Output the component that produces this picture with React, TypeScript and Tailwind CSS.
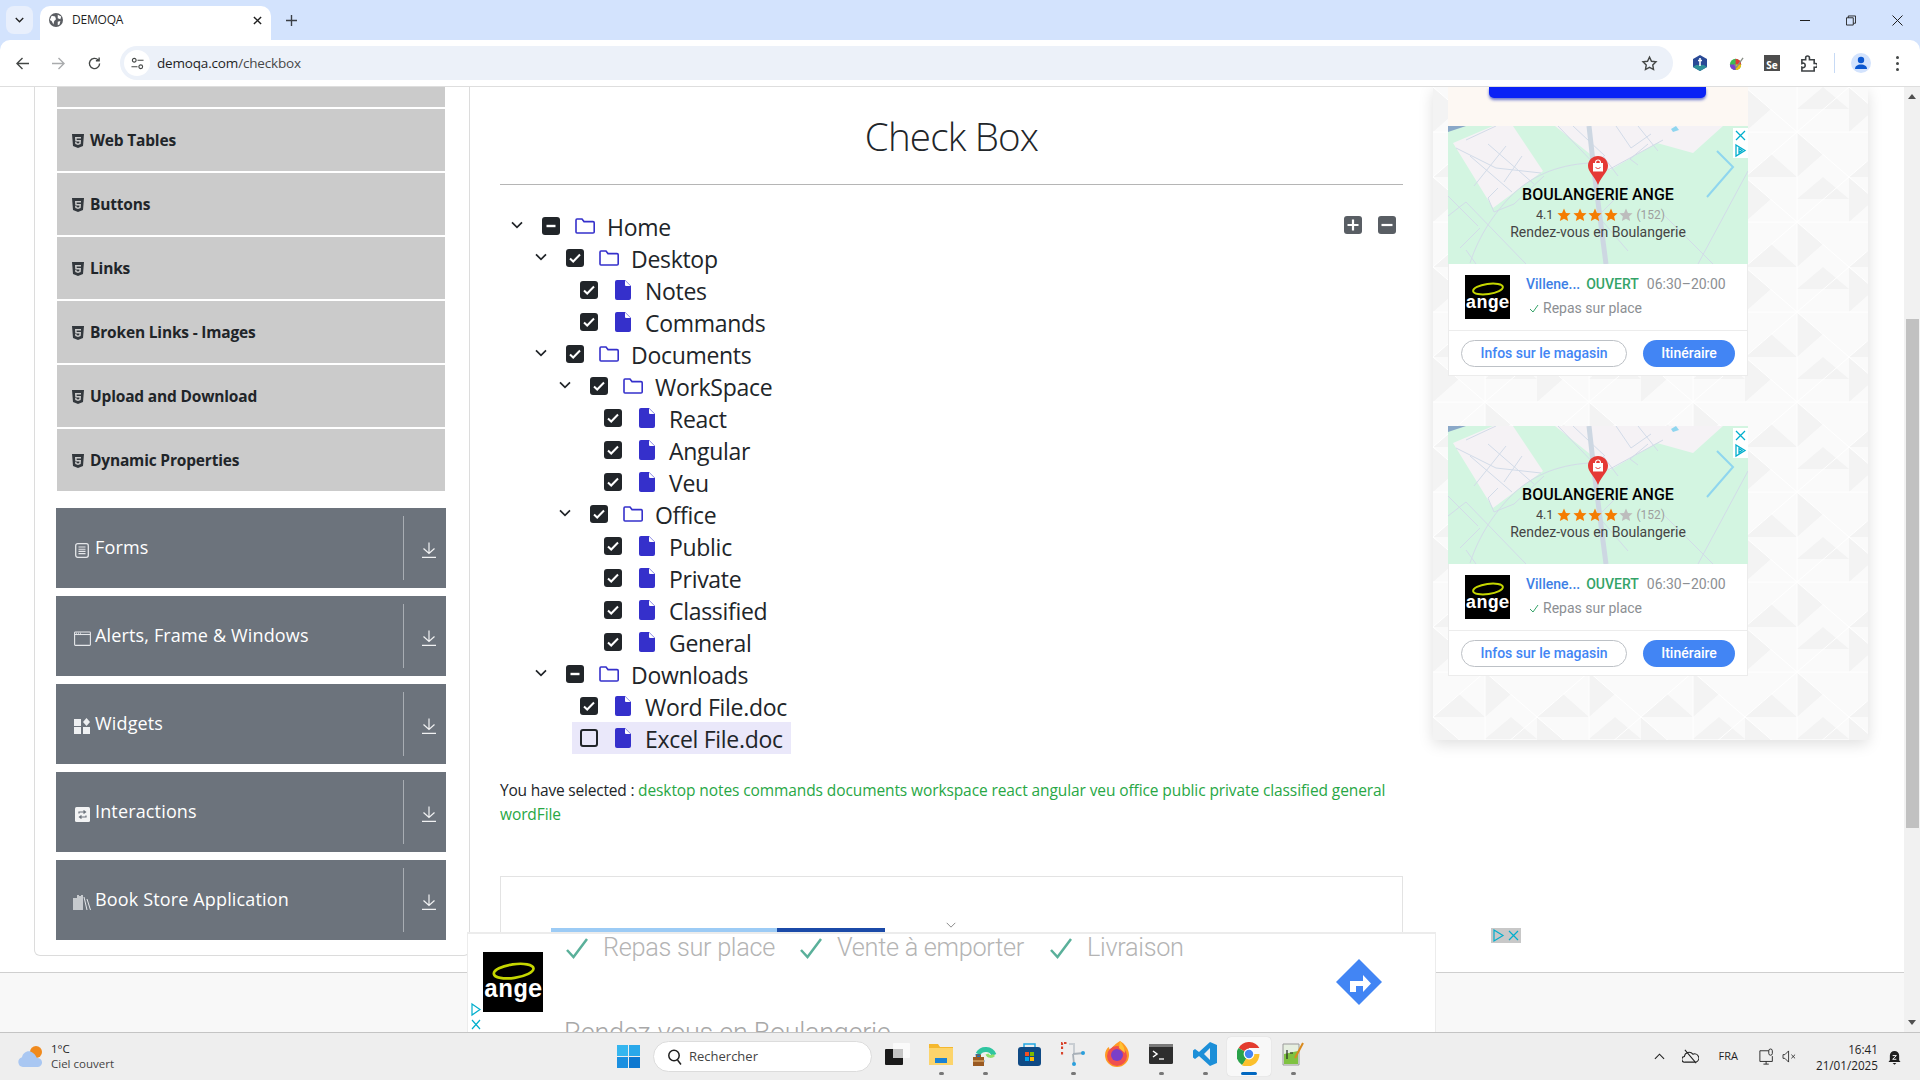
import type { ReactNode } from "react";

const uiFont = "[font-family:'Open_Sans','Noto_Sans',sans-serif]";

type TreeItem = {
  label: string;
  state?: "all" | "some" | "none";
  children?: TreeItem[];
  active?: boolean;
};

const tree: TreeItem = {
  label: "Home",
  state: "some",
  children: [
    {
      label: "Desktop",
      children: [{ label: "Notes" }, { label: "Commands" }],
    },
    {
      label: "Documents",
      children: [
        {
          label: "WorkSpace",
          children: [{ label: "React" }, { label: "Angular" }, { label: "Veu" }],
        },
        {
          label: "Office",
          children: [
            { label: "Public" },
            { label: "Private" },
            { label: "Classified" },
            { label: "General" },
          ],
        },
      ],
    },
    {
      label: "Downloads",
      state: "some",
      children: [
        { label: "Word File.doc" },
        { label: "Excel File.doc", state: "none", active: true },
      ],
    },
  ],
};

const elementItems = [
  "Web Tables",
  "Buttons",
  "Links",
  "Broken Links - Images",
  "Upload and Download",
  "Dynamic Properties",
];

function Html5Icon() {
  return (
    <svg viewBox="0 0 12 14" className="h-[14px] w-[12px] shrink-0">
      <path d="M0 0h12l-1 12-5 2-5-2z" fill="#33383d" />
      <path d="M3 3h6v1.500H4.600l.1 1.500H9l-.3 4L6 11l-2.700-1-.2-2h1.400l.1 1L6 9.500 7.300 9l.1-1.600H3.300z" fill="#cbcbcb" />
    </svg>
  );
}

function FormsIcon() {
  return (
    <svg viewBox="0 0 14 15" className="h-[15px] w-[14px]" fill="none" stroke="#e5e7ea">
      <rect x="0.700" y="0.700" width="12.600" height="13.600" rx="2" strokeWidth="1.300" />
      <path d="M3.500 4h7M3.500 6.200h7M3.500 8.400h7M3.500 10.600h7" strokeWidth="1.100" />
    </svg>
  );
}

function WindowIcon() {
  return (
    <svg viewBox="0 0 17 15" className="h-[15px] w-[17px]" fill="none" stroke="#e5e7ea">
      <rect x="0.600" y="1" width="15.800" height="13.400" rx="0.800" strokeWidth="1.100" />
      <path d="M0.600 3.500h15.800" strokeWidth="1.100" />
      <path d="M2 2.200h1M4 2.200h1M6 2.200h1" strokeWidth="1" />
    </svg>
  );
}

function WidgetsIcon() {
  return (
    <svg viewBox="0 0 16 16" className="h-[16px] w-[16px]" fill="#eef0f2">
      <rect x="0" y="1" width="7" height="7" />
      <rect x="0" y="9" width="7" height="7" />
      <rect x="9" y="9" width="7" height="7" />
      <path d="M12.500 0l3.500 4-3.500 4L9 4z" />
    </svg>
  );
}

function InteractionsIcon() {
  return (
    <svg viewBox="0 0 15 15" className="h-[15px] w-[15px]">
      <rect width="15" height="15" rx="1.500" fill="#f2f3f4" />
      <path d="M4 6.500V5h6M8.500 3.500L10.500 5 8.500 6.500M11 8.500V10H5M6.500 11.500L4.500 10l2-1.500" fill="none" stroke="#6c737c" strokeWidth="1.200" />
    </svg>
  );
}

function BooksIcon() {
  return (
    <svg viewBox="0 0 18 16" className="h-[16px] w-[18px]" fill="none" stroke="#e5e7ea">
      <path d="M1 4v12M3 4v12M5 1v15M7 2v14M9 1v15" strokeWidth="1.500" />
      <path d="M11 3l3 13M14 5l3.500 11" strokeWidth="1" />
    </svg>
  );
}

function DownloadArrow() {
  return (
    <svg viewBox="0 0 16 16" className="h-[16px] w-[16px]" fill="none" stroke="#f1f2f3" strokeWidth="1.200">
      <path d="M8 0.500v11M2.500 6.500L8 11.500l5.500-5M1 15.300h14" />
    </svg>
  );
}

function Chevron({ className }: { className: string }) {
  return (
    <svg viewBox="0 0 12 8" className={className} fill="none" stroke="currentColor" strokeWidth="1.700">
      <path d="M1 1.300l5 5 5-5" />
    </svg>
  );
}

function TreeCheckbox({ state }: { state: "all" | "some" | "none" }) {
  if (state === "none") {
    return <span className="block h-[18px] w-[18px] shrink-0 rounded-[3px] border-2 border-[#212529] bg-transparent" />;
  }
  return (
    <svg viewBox="0 0 18 18" className="h-[18px] w-[18px] shrink-0">
      <rect width="18" height="18" rx="3" fill="#212529" />
      {state === "all" ? (
        <path d="M4 9.500l3.200 3L14 5.500" fill="none" stroke="#fff" strokeWidth="2" />
      ) : (
        <path d="M4.500 9h9" stroke="#fff" strokeWidth="2.400" />
      )}
    </svg>
  );
}

function FolderIcon() {
  return (
    <svg viewBox="0 0 20 16" className="h-[16px] w-[20px] shrink-0" fill="none" stroke="#3530cb" strokeWidth="1.600">
      <path d="M1 14V2.300C1 1.500 1.400 1 2 1h5l2 2.600h9c.7 0 1.200.5 1.200 1.200V14c0 .6-.5 1-1.200 1H2c-.6 0-1-.4-1-1z" />
    </svg>
  );
}

function FileIcon() {
  return (
    <svg viewBox="0 0 16 20" className="h-[20px] w-[16px] shrink-0">
      <path d="M2 0h8l6 6v12a2 2 0 01-2 2H2a2 2 0 01-2-2V2a2 2 0 012-2z" fill="#3530cb" />
      <path d="M10 0.500L15.500 6H11a1 1 0 01-1-1z" fill="#fff" />
    </svg>
  );
}

function TreeNode({ item }: { item: TreeItem }) {
  const state = item.state ?? "all";
  if (!item.children) {
    return (
      <div className="flex h-8 items-center">
        <div className={`ml-[14px] flex h-8 items-center pl-2 ${item.active ? "bg-[#eae8fa] pr-[8px]" : ""}`}>
          <TreeCheckbox state={state} />
          <span className="ml-[17px]">
            <FileIcon />
          </span>
          <span className="ml-[14px] translate-y-[1px] text-[23px] leading-8 tracking-[-0.3px] text-[#212529]">{item.label}</span>
        </div>
      </div>
    );
  }
  return (
    <div>
      <div className="flex h-8 items-center">
        <span className="flex w-[14px] justify-center text-[#212529]">
          <Chevron className="h-[8px] w-[12px] -translate-y-[1px]" />
        </span>
        <span className="ml-[18px]">
          <TreeCheckbox state={state} />
        </span>
        <span className="ml-[15px]">
          <FolderIcon />
        </span>
        <span className="ml-[12px] translate-y-[1px] text-[23px] leading-8 tracking-[-0.3px] text-[#212529]">{item.label}</span>
      </div>
      <div className="pl-6">
        {item.children.map((child) => (
          <TreeNode key={child.label} item={child} />
        ))}
      </div>
    </div>
  );
}

function BrowserChrome() {
  return (
    <div className={`shrink-0 bg-[#d3e3fd] ${uiFont}`}>
      <div className="flex h-10 items-start pl-[6px] pt-[6px]">
        <div className="flex h-7 w-[27px] items-center justify-center rounded-lg bg-[#e8effc] text-[#1f1f1f]">
          <Chevron className="h-[6px] w-[9px]" />
        </div>
        <div className="ml-[7px] flex h-[34px] w-[231px] items-center rounded-t-[10px] bg-white pb-[6px] pl-[9px] pr-[9px]">
          <svg viewBox="0 0 16 16" className="h-[14px] w-[14px]">
            <circle cx="8" cy="8" r="8" fill="#5b5e63" />
            <path d="M3 3l4 1 1 3-2 2-1 4-2-4-2-1zM10 2l4 2-1 3-3-1zM10 10l3-1-1 4-2 1z" fill="#fff" />
          </svg>
          <span className="ml-[9px] flex-1 text-[12px] tracking-[-0.2px] text-[#1f1f1f]">DEMOQA</span>
          <svg viewBox="0 0 10 10" className="h-[9px] w-[9px]" fill="none" stroke="#1f1f1f" strokeWidth="1.600">
            <path d="M1 1l8 8M9 1l-8 8" />
          </svg>
        </div>
        <svg viewBox="0 0 12 12" className="ml-[15px] mt-[9px] h-[11px] w-[11px]" fill="none" stroke="#3a3f45" strokeWidth="1.500">
          <path d="M6 0v12M0 6h12" />
        </svg>
        <div className="ml-auto flex h-[28px] items-center pr-[17px] text-[#1f1f1f]">
          <span className="h-px w-[10px] bg-[#1f1f1f]" />
          <svg viewBox="0 0 11 11" className="ml-[36px] h-[11px] w-[10px]" fill="none" stroke="#1f1f1f">
            <path d="M0.500 2.500h7.500v8h-7.500zM2.500 2.500v-2h8v8h-2.500" />
          </svg>
          <svg viewBox="0 0 11 11" className="ml-[36px] h-[11px] w-[11px]" fill="none" stroke="#1f1f1f">
            <path d="M0.500 0.500l10 10M10.500 0.500l-10 10" />
          </svg>
        </div>
      </div>
      <div className="flex h-[47px] items-center rounded-t-[10px] border-b border-[#dedede] bg-white pl-1">
        <span className="flex w-9 justify-center">
          <svg viewBox="0 0 14 14" className="h-[13px] w-[13px]" fill="none" stroke="#444746" strokeWidth="1.500">
            <path d="M14 7H1.500M7 1L1 7l6 6" />
          </svg>
        </span>
        <span className="flex w-9 justify-center">
          <svg viewBox="0 0 14 14" className="h-[13px] w-[13px]" fill="none" stroke="#a9abad" strokeWidth="1.500">
            <path d="M0 7h12.500M7 1l6 6-6 6" />
          </svg>
        </span>
        <span className="flex w-9 justify-center">
          <svg viewBox="0 0 14 14" className="h-[13px] w-[13px]" fill="none" stroke="#444746" strokeWidth="1.500">
            <path d="M12.500 7A5.500 5.500 0 1111 3.200M12 0.500v3.500H8.500" />
          </svg>
        </span>
        <div className="ml-2 flex h-[34px] w-[1553px] items-center rounded-full bg-[#ecf1f9] pl-[4px]">
          <span className="flex h-[26px] w-[26px] items-center justify-center rounded-full bg-white">
            <svg viewBox="0 0 14 14" className="h-[13px] w-[13px]" fill="none" stroke="#444746" strokeWidth="1.200">
              <circle cx="3.500" cy="3.500" r="2" />
              <circle cx="10.500" cy="10.500" r="2" />
              <path d="M7 3.500h6.500M0.500 10.500H7" />
            </svg>
          </span>
          <span className="ml-[7px] text-[13.500px] tracking-[-0.17px] text-[#1f1f1f]">
            demoqa.com<span className="text-[#474747]">/checkbox</span>
          </span>
          <svg viewBox="0 0 24 24" className="ml-auto mr-[15px] h-[17px] w-[17px]" fill="none" stroke="#444746" strokeWidth="2">
            <path d="M12 3l2.800 5.800 6.400.9-4.600 4.500 1.100 6.300L12 17.500l-5.700 3 1.100-6.300L2.800 9.700l6.400-.9z" />
          </svg>
        </div>
        <div className="ml-[9px] flex items-center">
          <span className="flex w-9 justify-center">
            <svg viewBox="0 0 14 16" className="h-[16px] w-[14px]">
              <path d="M7 0l7 4v8l-7 4-7-4V4z" fill="#2a4a96" />
              <path d="M7 16l-7-4 3-2h8l3 2z" fill="#2f8f98" />
              <path d="M7 3v8M5 5.500h4" stroke="#fff" strokeWidth="1.600" />
            </svg>
          </span>
          <span className="flex w-9 justify-center">
            <svg viewBox="0 0 16 16" className="h-[15px] w-[15px]">
              <circle cx="7" cy="9" r="6" fill="#3cba54" />
              <path d="M7 9V3a6 6 0 016 6z" fill="#e53935" />
              <path d="M7 9h6a6 6 0 01-6 6z" fill="#f4c20d" />
              <path d="M7 9v6a6 6 0 01-6-6z" fill="#7b3fd0" />
              <path d="M6 9l2 3 7-10" fill="none" stroke="#8a8f86" strokeWidth="1.400" />
            </svg>
          </span>
          <span className="flex w-9 justify-center">
            <span className="relative flex h-[16px] w-[16px] items-end justify-center bg-[#4d4d4d] text-[10px] font-bold leading-[12px] text-white">
              Se
            </span>
          </span>
          <span className="flex w-9 justify-center">
            <svg viewBox="0 0 18 18" className="h-[17px] w-[17px]" fill="none" stroke="#3c4043" strokeWidth="1.700">
              <path d="M2 5h4V3a2 2 0 014 0v2h5v4h1.500a2 2 0 010 4H15v4H2v-4c2 1 3.500 0 3.500-2S4 8 2 9z" />
            </svg>
          </span>
          <span className="ml-2 h-[20px] w-px bg-[#c7daf5]" />
          <span className="ml-2 flex w-9 justify-center">
            <span className="flex h-[20px] w-[20px] items-center justify-center rounded-full bg-[#d3e3fd]">
              <svg viewBox="0 0 14 14" className="h-[14px] w-[14px]" fill="#0b57d0">
                <circle cx="7" cy="4" r="3.200" />
                <path d="M1 13c0-3 2.500-4.500 6-4.500s6 1.500 6 4.500z" />
              </svg>
            </span>
          </span>
          <span className="flex w-9 flex-col items-center gap-[3px]">
            <span className="h-[3px] w-[3px] rounded-full bg-[#444746]" />
            <span className="h-[3px] w-[3px] rounded-full bg-[#444746]" />
            <span className="h-[3px] w-[3px] rounded-full bg-[#444746]" />
          </span>
        </div>
      </div>
    </div>
  );
}

function GroupHeader({ icon, label }: { icon: ReactNode; label: string }) {
  return (
    <div className="mb-2 flex h-20 items-center bg-[#6c737c] text-white">
      <span className="flex w-[37px] justify-end pt-[4px]">
        <span className="flex w-[22px] justify-center">{icon}</span>
      </span>
      <span className="flex-1 -translate-y-[1px] pl-[2px] text-[18px] tracking-[0.15px]">{label}</span>
      <div className="flex h-16 w-[43px] items-center justify-center border-l border-[#a8adb3] pl-[8px] pt-[4px]">
        <DownloadArrow />
      </div>
    </div>
  );
}

function Sidebar() {
  return (
    <aside className="ml-[34px] h-[869px] w-[436px] shrink-0 rounded-b-[6px] border-x border-b border-[#dcdcdc] pl-[21px] pr-[23px]">
      <div className="flex flex-col gap-[2px] px-px">
        <div className="h-5 bg-[#cbcbcb]" />
        {elementItems.map((item) => (
          <div key={item} className="flex h-[62px] items-center gap-[6px] bg-[#cbcbcb] pl-[15px] pt-[2px] text-[15.500px] font-bold tracking-[-0.18px] text-[#212529]">
            <Html5Icon />
            {item}
          </div>
        ))}
      </div>
      <div className="mt-[17px]">
        <GroupHeader icon={<FormsIcon />} label="Forms" />
        <GroupHeader icon={<WindowIcon />} label="Alerts, Frame & Windows" />
        <GroupHeader icon={<WidgetsIcon />} label="Widgets" />
        <GroupHeader icon={<InteractionsIcon />} label="Interactions" />
        <GroupHeader icon={<BooksIcon />} label="Book Store Application" />
      </div>
    </aside>
  );
}

function MainContent() {
  return (
    <main className="flex h-full w-[963px] shrink-0 flex-col px-[30px]">
      <div className="flex h-[98px] items-center justify-center border-b border-[#b5b5b5]">
        <h1 className="translate-y-[1px] text-[38.500px] font-light tracking-[-0.8px] text-[#212529]">Check Box</h1>
      </div>
      <div className="relative pl-[10px] pt-[25px]">
        <TreeNode item={tree} />
        <div className="absolute right-[7px] top-[31px] flex gap-4">
          <svg viewBox="0 0 18 18" className="h-[18px] w-[18px]">
            <rect width="18" height="18" rx="3" fill="#595e64" />
            <path d="M9 3.500v11M3.500 9h11" stroke="#fff" strokeWidth="2.200" />
          </svg>
          <svg viewBox="0 0 18 18" className="h-[18px] w-[18px]">
            <rect width="18" height="18" rx="3" fill="#595e64" />
            <path d="M3.500 9h11" stroke="#fff" strokeWidth="2.200" />
          </svg>
        </div>
      </div>
      <p className="mt-6 text-[15.500px] leading-6 tracking-[-0.2px] text-[#212529]">
        You have selected :{" "}
        <span className="tracking-[-0.1px] text-[#28a745]">
          desktop notes commands documents workspace react angular veu office public private classified general wordFile
        </span>
      </p>
      <div className="mt-[50px] flex-1 border-x border-t border-[#e3e3e3]" />
    </main>
  );
}

function AngeLogo({ className }: { className: string }) {
  return (
    <svg viewBox="0 0 45 44" preserveAspectRatio="none" className={className}>
      <rect width="45" height="44" fill="#000" />
      <ellipse cx="23" cy="14" rx="15" ry="5" fill="none" stroke="#c5d600" strokeWidth="2" transform="rotate(-8 23 14)" />
      <text x="0.500" y="33" textLength="44" lengthAdjust="spacingAndGlyphs" fontSize="19" fontWeight="700" fill="#fff" fontFamily="'Liberation Mono', monospace">
        ange
      </text>
    </svg>
  );
}

function MapArt() {
  return (
    <svg viewBox="0 0 300 138" className="h-full w-full" fill="none">
      <rect width="300" height="138" fill="#d3f5e1" />
      <path d="M5 17L45 0h20L95 45 45 82zM107 0h168l-30 27-36-10-47 27z" fill="#f5f2f5" />
      <path d="M0 0h18L0 6z" fill="#8aa8c8" />
      <path d="M228 0l3 4-6 2-2-3z" fill="#8fd6ef" />
      <path d="M18 14l30-14M8 22l40 20 45 5M22 30l42 36M40 18l46 40M58 20l-32 40M74 30l-18 26M96 50l-30 28-20 8-6-14 10-10M22 137c10-30 25-50 40-66 20-20 45-32 80-34M0 90l18-14 60 62M0 70l30 30M110 0l42 44M125 0l32 30M168 0l15 22 20-14M190 0l20 25M160 44l55-30M155 30l15 20M200 18l-18 15 8 6M215 88l50 50M180 125l-30-35 30-30M300 45l-50 93M28 138l-10-14M12 122l20-20" stroke="#d2dbe8" strokeWidth="1" />
      <path d="M141 0l5 45 12 93" stroke="#cdd7e2" strokeWidth="5" />
      <path d="M269 25l16 16-26 30" stroke="#8fd6ef" strokeWidth="2" />
    </svg>
  );
}

function Star({ filled }: { filled: boolean }) {
  return (
    <svg viewBox="0 0 24 24" className="h-[14px] w-[14px]">
      <path d="M12 1l3.300 7.400 8 .8-6 5.300 1.800 7.900L12 18.300l-7.100 4.100 1.800-7.900-6-5.300 8-.8z" fill={filled ? "#f57c00" : "#bdbdbd"} />
    </svg>
  );
}

function AdChoiceMarks() {
  return (
    <div className="absolute right-0 top-[2px] flex w-[15px] flex-col bg-white">
      <svg viewBox="0 0 15 15" className="h-[15px] w-[15px]" fill="none" stroke="#00aecd" strokeWidth="1.300">
        <path d="M3 3l9 9M12 3l-9 9" />
      </svg>
      <svg viewBox="0 0 15 15" className="h-[15px] w-[15px]" fill="none" stroke="#00aecd" strokeWidth="1.300">
        <path d="M3 2l9 5.500L3 13zM6 5.500l3 2-3 2z" />
      </svg>
    </div>
  );
}

function StoreCard() {
  return (
    <div className="relative h-[250px] w-[300px] bg-white [font-family:Roboto,sans-serif]">
      <div className="relative h-[138px]">
        <MapArt />
        <AdChoiceMarks />
        <div className="absolute inset-x-0 top-[30px] flex flex-col items-center">
          <svg viewBox="0 0 20 29" className="h-[29px] w-[20px]">
            <path d="M10 0c5.600 0 10 4.300 10 9.800 0 6-6 9.500-10 19.200C6 19.300 0 15.800 0 9.800 0 4.300 4.400 0 10 0z" fill="#e53935" />
            <path d="M5 7h10v8.500H5z" fill="#fff" />
            <path d="M7.500 7c0-4 5-4 5 0" fill="none" stroke="#fff" strokeWidth="1.200" />
            <path d="M7.500 11c1 2 4 2 5 0" fill="none" stroke="#e53935" strokeWidth="1" />
          </svg>
          <span className="text-[16px] font-medium leading-[20px] text-black">BOULANGERIE ANGE</span>
          <span className="flex h-[20px] items-center pl-[5px] text-[12.500px] text-[#444]">
            4.1
            <span className="ml-[4px] flex gap-[1.500px]">
              <Star filled />
              <Star filled />
              <Star filled />
              <Star filled />
              <Star filled={false} />
            </span>
            <span className="ml-[3px] text-[12px] text-[#9e9e9e]">(152)</span>
          </span>
          <span className="-mt-px text-[14px] leading-[16px] text-[#444]">Rendez-vous en Boulangerie</span>
        </div>
      </div>
      <div className="flex h-[67px] items-start border-x border-b border-[#ececec] pl-4 pt-[11px]">
        <AngeLogo className="h-[44px] w-[45px]" />
        <div className="ml-4">
          <div className="flex h-[18px] items-center text-[14px] leading-[18px]">
            <span className="font-medium text-[#3d7fe6]">Villene...</span>
            <span className="ml-[6px] font-medium text-[#34a468]">OUVERT</span>
            <span className="ml-[8px] text-[#8c8f93]">06:30–20:00</span>
          </div>
          <div className="mt-[6px] flex items-center text-[14px] leading-[18px] text-[#8c8f93]">
            <svg viewBox="0 0 10 9" className="ml-[3px] mr-[4px] h-[9px] w-[10px]" fill="none" stroke="#34a468" strokeWidth="1">
              <path d="M1 5l3 3 5-7" />
            </svg>
            Repas sur place
          </div>
        </div>
      </div>
      <div className="flex h-[45px] items-center gap-4 border-x border-b border-[#ececec] pl-[12px]">
        <span className="flex h-[27px] w-[166px] items-center justify-center rounded-full border border-[#bdc1c6] text-[14px] font-medium text-[#4285f4]">
          Infos sur le magasin
        </span>
        <span className="flex h-[27px] w-[92px] items-center justify-center rounded-full bg-[#4285f4] text-[14px] font-medium text-white">
          Itinéraire
        </span>
      </div>
    </div>
  );
}

function AdPanel() {
  return (
    <div className="relative h-[653px] w-[435px] shrink-0 overflow-hidden bg-[#fafafa] pl-[15px] shadow-[0_4px_14px_rgba(0,0,0,0.13)]">
      <svg className="absolute inset-0 h-full w-full">
        <defs>
          <pattern id="tri" width="104" height="90" patternUnits="userSpaceOnUse">
            <path d="M0 0l26 22L0 45zM52 45l26 22-26 23zM78 0l26 22H52zM26 67l26 23H0z" fill="#f3f3f3" />
            <path d="M0 0l104 90M104 0L0 90M52 0v90M0 45h104" stroke="#fff" strokeWidth="1" />
          </pattern>
        </defs>
        <rect width="100%" height="100%" fill="url(#tri)" />
      </svg>
      <div className="relative">
        <div className="h-[39px] w-[300px] bg-[#fdf8f3] pl-[41px]">
          <div className="h-[11px] w-[217px] rounded-b-[5px] bg-[#0a22f5] shadow-[0_2px_3px_rgba(10,34,180,0.6)]" />
        </div>
        <StoreCard />
        <div className="h-[50px]" />
        <StoreCard />
      </div>
    </div>
  );
}

function CheckMark({ className }: { className: string }) {
  return (
    <svg viewBox="0 0 24 24" className={className} fill="none" stroke="#5ab09a" strokeWidth="2.500">
      <path d="M2 14l6.500 7L22 3" />
    </svg>
  );
}

function StickyAd() {
  return (
    <div className="absolute bottom-0 left-[467px] h-[100px] w-[969px] overflow-hidden border-x border-t-2 border-[#ececec] bg-white [font-family:Roboto,sans-serif]">
      <div className="flex h-[28px] items-center pl-[96px] text-[25.300px] font-light tracking-[-0.3px] text-[#b4b4b4]">
        <CheckMark className="h-[24px] w-[26px]" />
        <span className="ml-[13px]">Repas sur place</span>
        <CheckMark className="ml-[23px] h-[24px] w-[26px]" />
        <span className="ml-[13px]">Vente à emporter</span>
        <CheckMark className="ml-[24px] h-[24px] w-[26px]" />
        <span className="ml-[13px]">Livraison</span>
      </div>
      <div className="absolute left-[15px] top-[18px]">
        <AngeLogo className="h-[60px] w-[60px]" />
      </div>
      <div className="absolute left-[96px] top-[84px] text-[27px] font-light leading-[30px] tracking-[-0.3px] text-[#a8a8a8]">
        Rendez-vous en Boulangerie
      </div>
      <svg viewBox="0 0 46 46" className="absolute left-[868px] top-[25px] h-[46px] w-[46px]">
        <path d="M23 0l23 23-23 23L0 23z" fill="#4285f4" />
        <path d="M14 33V22h13v-6l8 8.500-8 8.500v-6h-7v6z" fill="#fff" />
      </svg>
      <div className="absolute bottom-0 left-[2px] flex flex-col">
        <svg viewBox="0 0 12 15" className="h-[15px] w-[12px]" fill="none" stroke="#00aecd" strokeWidth="1.200">
          <path d="M2 2l8 5.500L2 13z" />
        </svg>
        <svg viewBox="0 0 12 15" className="h-[15px] w-[12px]" fill="none" stroke="#00aecd" strokeWidth="1.200">
          <path d="M2 3l8 9M10 3l-8 9" />
        </svg>
      </div>
    </div>
  );
}

function TaskIcon({ children, dot, active }: { children: ReactNode; dot?: boolean; active?: boolean }) {
  return (
    <div className={`relative flex h-[39px] w-[44px] items-center justify-center rounded ${active ? "bg-[#f8f8f8] shadow-[0_0_1px_rgba(0,0,0,0.2)]" : ""}`}>
      <span className="-mt-[5px]">{children}</span>
      {dot && !active && <span className="absolute bottom-[1px] h-[3px] w-[5px] rounded-full bg-[#777]" />}
      {active && <span className="absolute bottom-[1px] h-[3px] w-[16px] rounded-full bg-[#0067c0]" />}
    </div>
  );
}

function Taskbar() {
  return (
    <footer className={`flex h-[48px] shrink-0 items-center border-t border-[#c4c4c4] bg-[#eeeeee] text-[#1f1f1f] ${uiFont}`}>
      <div className="flex w-[617px] items-center pl-[18px]">
        <svg viewBox="0 0 26 22" className="h-[22px] w-[26px]">
          <circle cx="18" cy="6" r="6" fill="#f08a1d" />
          <path d="M5 21a5 5 0 01-1-9.800C5 6 11 3 15 7c3 2 3 4 4 5a4.500 4.500 0 011 9z" fill="#a9c7f2" />
        </svg>
        <div className="ml-[7px] flex -translate-y-px flex-col text-[11.500px] leading-[15px]">
          <span>1°C</span>
          <span className="text-[#444]">Ciel couvert</span>
        </div>
      </div>
      <svg viewBox="0 0 23 23" className="h-[23px] w-[23px] shrink-0">
        <path d="M0 0h11v11H0z" fill="#35b6ef" />
        <path d="M12 0h11v11H12z" fill="#2aa8ea" />
        <path d="M0 12h11v11H0z" fill="#1a8fe0" />
        <path d="M12 12h11v11H12z" fill="#0e78d0" />
      </svg>
      <div className="ml-[13px] flex h-[31px] w-[219px] items-center rounded-full border border-[#dcdcdc] bg-white pl-[13px] text-[13px] text-[#444]">
        <svg viewBox="0 0 16 16" className="h-[16px] w-[16px]" fill="none" stroke="#1f1f1f" strokeWidth="1.500">
          <circle cx="7" cy="6.500" r="5.200" />
          <path d="M10.500 11l3.500 4.500" />
        </svg>
        <span className="ml-[6px]">Rechercher</span>
      </div>
      <div className="ml-[3px] flex items-center">
        <TaskIcon>
          <svg viewBox="0 0 25 22" className="h-[22px] w-[25px]">
            <rect x="8" y="0" width="17" height="15" rx="1" fill="#fafafa" />
            <rect x="0" y="6" width="18" height="16" rx="1" fill="#1a1a1a" />
            <rect x="8" y="6" width="10" height="9" fill="#c4c4c4" />
          </svg>
        </TaskIcon>
        <TaskIcon dot>
          <svg viewBox="0 0 24 22" className="h-[22px] w-[24px]">
            <path d="M0 1h9l2 3h13v18H0z" fill="#f5b82e" />
            <path d="M0 5h24v17H0z" fill="#fcd46b" />
            <path d="M6 15h12v5H6z" fill="#1a82d4" />
          </svg>
        </TaskIcon>
        <TaskIcon dot>
          <svg viewBox="0 0 24 24" className="h-[24px] w-[24px]" fill="none">
            <path d="M5 12A9 9 0 0121 13" stroke="#2fc5a0" strokeWidth="5" />
            <path d="M21 13c-2 2-6 2-7-1" stroke="#8ee06e" strokeWidth="3" />
            <path d="M5 12c0 5 2 8 6 9" stroke="#1574c9" strokeWidth="5" />
            <path d="M0 15h11v9H0z" fill="#9a5a22" />
            <path d="M0 18.500h11v1H0z" fill="#f3c784" />
            <path d="M3.500 15v-2h4v2" stroke="#9a5a22" strokeWidth="1" />
          </svg>
        </TaskIcon>
        <TaskIcon>
          <svg viewBox="0 0 23 23" className="h-[23px] w-[23px]">
            <path d="M6 5V1h11v4" fill="none" stroke="#22a8e4" strokeWidth="1.500" />
            <rect y="4" width="23" height="19" rx="3" fill="#0f4a85" />
            <path d="M7 9h4v4H7z" fill="#f25022" />
            <path d="M12 9h4v4h-4z" fill="#7fba00" />
            <path d="M7 14h4v4H7z" fill="#00a4ef" />
            <path d="M12 14h4v4h-4z" fill="#ffb900" />
          </svg>
        </TaskIcon>
        <TaskIcon dot>
          <svg viewBox="0 0 24 24" className="h-[24px] w-[24px]">
            <path d="M1 7V1h6M1 10v3" fill="none" stroke="#d8442c" strokeWidth="2.200" strokeDasharray="2.500 1.500" />
            <path d="M8 2h5v10" fill="none" stroke="#c9ced3" strokeWidth="2" />
            <path d="M12 12l11-1M12 12l1 10" fill="none" stroke="#a8b0b8" strokeWidth="1.800" />
            <circle cx="22" cy="11" r="2" fill="#2a9fdc" />
            <circle cx="13" cy="22" r="2" fill="#2a9fdc" />
          </svg>
        </TaskIcon>
        <TaskIcon>
          <svg viewBox="0 0 24 26" className="h-[26px] w-[24px]">
            <path d="M15 0c5 3 9 8 9 14a12 12 0 01-24 0C0 10 2 7 4 6c0 2 1 3 2 3 1-4 5-6 9-9z" fill="#ff9a24" />
            <circle cx="12" cy="15" r="10" fill="#f0504e" />
            <path d="M12 8a6 6 0 106 6c0-3-2-5-6-6z" fill="#7a3fc8" />
            <path d="M15 0c3 4 5 8 5 12l-6-5z" fill="#ffc233" />
          </svg>
        </TaskIcon>
        <TaskIcon dot>
          <svg viewBox="0 0 24 20" className="h-[20px] w-[24px]">
            <rect width="24" height="20" rx="1.500" fill="#2e2e2e" />
            <rect width="24" height="3" fill="#7a7a7a" />
            <path d="M4 7l4 3-4 3" fill="none" stroke="#fff" strokeWidth="1.500" />
            <path d="M10 15h5" stroke="#fff" strokeWidth="1.300" />
          </svg>
        </TaskIcon>
        <TaskIcon dot>
          <svg viewBox="0 0 24 24" className="h-[24px] w-[24px]">
            <path d="M17 0l7 3v18l-7 3-11-10-4 3-2-1.500v-7L2 7l4 3z" fill="#1c8fd8" />
            <path d="M17 6l-6 6 6 6z" fill="#eeeeee" />
          </svg>
        </TaskIcon>
        <TaskIcon active>
          <svg viewBox="0 0 24 24" className="h-[24px] w-[24px]">
            <path d="M12 12L1.600 6A12 12 0 0122.400 6H12z" fill="#e33b2e" />
            <path d="M12 12l-5.200 9 -1.800 2A12 12 0 011.600 6z" fill="#2aa24a" />
            <path d="M12 12h10.400A12 12 0 015 23.200z" fill="#fbc02d" />
            <circle cx="12" cy="12" r="5.400" fill="#fff" />
            <circle cx="12" cy="12" r="4.200" fill="#4285f4" />
          </svg>
        </TaskIcon>
        <TaskIcon dot>
          <svg viewBox="0 0 22 24" className="h-[24px] w-[22px]">
            <path d="M1 2h16v21H1z" fill="#e6efe0" stroke="#9a9a9a" />
            <path d="M2 12l14-3v13H2z" fill="#7fc241" />
            <path d="M5 8v9M8 11h3" stroke="#222" strokeWidth="1.200" />
            <path d="M21 1l-8 15" stroke="#d98a1e" strokeWidth="2" />
          </svg>
        </TaskIcon>
      </div>
      <div className="ml-auto flex items-center pr-[19px]">
        <svg viewBox="0 0 12 7" className="h-[7px] w-[11px]" fill="none" stroke="#1f1f1f" strokeWidth="1.200">
          <path d="M1 6l5-5 5 5" />
        </svg>
        <svg viewBox="0 0 18 16" className="ml-[17px] h-[15px] w-[17px]" fill="none" stroke="#1f1f1f" strokeWidth="1.100">
          <path d="M3 14a3 3 0 01-.5-6 5 5 0 019-2.500A4 4 0 0115 14zM3 1l12 14" />
        </svg>
        <span className="ml-[20px] text-[11px]">FRA</span>
        <svg viewBox="0 0 18 20" className="ml-[21px] h-[18px] w-[16px]" fill="none" stroke="#1f1f1f" strokeWidth="1">
          <path d="M11 3H1v12h14V9M5 18h6M8 15v3" />
          <rect x="11" y="1" width="4" height="7" rx="2" />
        </svg>
        <svg viewBox="0 0 16 14" className="ml-[7px] h-[13px] w-[15px]" fill="none" stroke="#1f1f1f" strokeWidth="0.900">
          <path d="M1 5h2l4-4v12l-4-4H1zM10 5l4 4M14 5l-4 4" />
        </svg>
        <div className="ml-[19px] flex flex-col items-end text-[11.700px] leading-[16px]">
          <span>16:41</span>
          <span>21/01/2025</span>
        </div>
        <svg viewBox="0 0 14 18" className="ml-[10px] h-[17px] w-[13px]" fill="#1f1f1f">
          <path d="M7 3a5 5 0 015 5v5l1.500 2H.5L2 13V8a5 5 0 015-5zM5 16h4l-2 2z" />
          <path d="M5 8h4L5 12h4" fill="none" stroke="#fff" strokeWidth="1" />
        </svg>
      </div>
    </footer>
  );
}

function PageScrollbar() {
  return (
    <div className="flex h-full w-4 shrink-0 flex-col items-center bg-[#f1f1f1]">
      <div className="flex h-[19px] items-center text-[#505050]">
        <span className="h-0 w-0 border-x-[4px] border-b-[5px] border-x-transparent border-b-[#505050]" />
      </div>
      <div className="mt-[213px] h-[509px] w-[13px] bg-[#c1c1c1]" />
      <div className="mt-auto flex h-[19px] items-center">
        <span className="h-0 w-0 border-x-[4px] border-t-[5px] border-x-transparent border-t-[#505050]" />
      </div>
    </div>
  );
}

export default function App() {
  return (
    <div className={`flex h-[1080px] w-[1920px] flex-col overflow-hidden bg-white ${uiFont}`}>
      <BrowserChrome />
      <div className="flex h-[945px] min-h-0 flex-1">
        <div className="relative flex min-w-0 flex-1 flex-col overflow-hidden">
          <div className="flex h-[885px] shrink-0">
            <Sidebar />
            <MainContent />
            <AdPanel />
          </div>
          <div className="flex-1 border-t border-[#cfcfcf] bg-[#f8f8f8]" />

          {/* progress bar of the sticky ad, just above it */}
          <div className="absolute left-[551px] top-[841px] flex h-1 w-[334px]">
            <div className="w-[226px] bg-[#9ccbf5]" />
            <div className="flex-1 bg-[#1b4aa8]" />
          </div>
          <svg viewBox="0 0 12 7" className="absolute left-[945px] top-[835px] h-[6px] w-[12px]" fill="none" stroke="#777" strokeWidth="1">
            <path d="M1 1l5 5 5-5" />
          </svg>
          <div className="absolute left-[1491px] top-[841px] flex h-[15px] w-[30px] bg-[#c8c8c8]">
            <svg viewBox="0 0 15 15" className="h-[15px] w-[15px]" fill="none" stroke="#00aecd" strokeWidth="1.200">
              <path d="M3 2l9 5.500L3 13z" />
            </svg>
            <svg viewBox="0 0 15 15" className="h-[15px] w-[15px]" fill="none" stroke="#00aecd" strokeWidth="1.200">
              <path d="M3 3l9 9M12 3l-9 9" />
            </svg>
          </div>
          <StickyAd />
        </div>
        <PageScrollbar />
      </div>
      <Taskbar />
    </div>
  );
}
